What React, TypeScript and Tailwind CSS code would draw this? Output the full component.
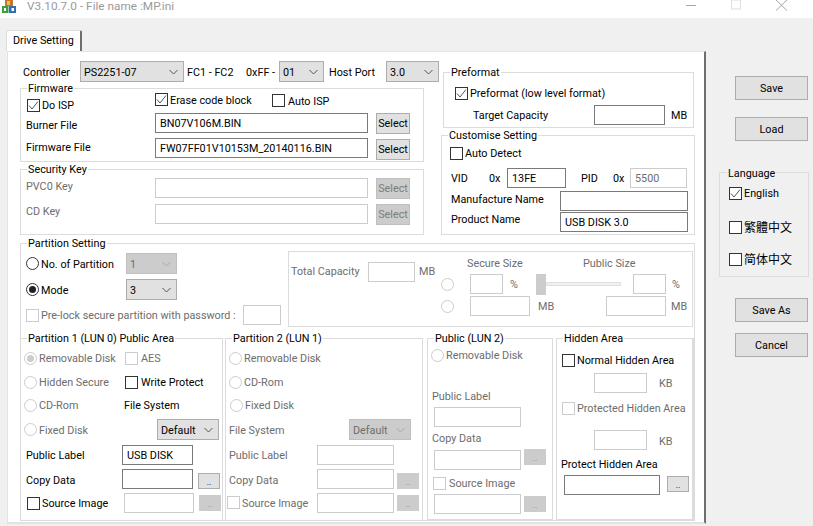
import React from 'react';

const FONT = 'font-["Roboto",sans-serif]';

// label, pushed down a pixel because Roboto sits high in its line box
const L = ({ className = '', children }: { className?: string; children?: React.ReactNode }) => (
  <span className={`pt-[2px] ${className}`}>{children}</span>
);

// win32 style controls
const Chk = ({ on, off, className = '' }: { on?: boolean; off?: boolean; className?: string }) => (
  <span className={`inline-flex h-[13px] w-[13px] shrink-0 items-center justify-center border bg-white ${off ? 'border-[#cccccc]' : 'border-[#333333]'} ${className}`}>
    {on && (
      <svg width="11" height="11" viewBox="0 0 11 11" fill="none">
        <path d="M1 5.5 L4 9 L10 1.5" stroke="#555555" strokeWidth="1" />
      </svg>
    )}
  </span>
);

const Radio = ({ on, off, className = '' }: { on?: boolean; off?: boolean; className?: string }) => (
  <span className={`inline-flex h-[13px] w-[13px] shrink-0 items-center justify-center rounded-full border bg-white ${off ? 'border-[#cccccc]' : 'border-[#333333]'} ${className}`}>
    {on && <span className={`h-[7px] w-[7px] rounded-full ${off ? 'bg-[#cccccc]' : 'bg-[#222222]'}`} />}
  </span>
);

const Input = ({ value, off, className = '' }: { value?: string; off?: boolean; className?: string }) => (
  <span className={`flex h-[20px] shrink-0 items-center border bg-white pl-[4px] ${off ? 'border-[#cccccc] text-[#6d6d6d]' : 'border-[#7a7a7a] text-black'} ${className}`}>
    <L>{value}</L>
  </span>
);

const Btn = ({ label, off, className = '' }: { label: string; off?: boolean; className?: string }) => (
  <span className={`flex shrink-0 items-center justify-center border ${off ? 'border-[#bfbfbf] bg-[#cccccc] text-[#7d7d7d]' : 'border-[#adadad] bg-[#e1e1e1] text-black'} ${className}`}>
    <L>{label}</L>
  </span>
);

const Dots = ({ off, className = '' }: { off?: boolean; className?: string }) => (
  <span className={`flex h-[16px] w-[22px] shrink-0 items-end justify-center border pb-[1px] text-[9px] leading-[9px] ${off ? 'border-[#cccccc] bg-[#cccccc] text-[#8a8a8a]' : 'border-[#adadad] bg-[#e1e1e1] text-black'} ${className}`}>
    ..
  </span>
);

const Sel = ({ value, off, className = '' }: { value: string; off?: boolean; className?: string }) => (
  <span className={`flex h-[21px] shrink-0 items-center justify-between border pl-[3px] pr-[5px] ${off ? 'border-[#bfbfbf] bg-[#cccccc] text-[#6d6d6d]' : 'border-[#adadad] bg-[#e1e1e1] text-black'} ${className}`}>
    <L>{value}</L>
    <svg width="9" height="6" viewBox="0 0 9 6" fill="none">
      <path d="M0.5 1 L4.5 5 L8.5 1" stroke={off ? '#a8a8a8' : '#555555'} strokeWidth="1" />
    </svg>
  </span>
);

const Group = ({ title, className = '', children }: { title: string; className?: string; children: React.ReactNode }) => (
  <div className={`relative shrink-0 border border-[#dcdcdc] ${className}`}>
    <span className="absolute left-[6px] top-[-7px] bg-white px-[1px] leading-[14px] text-black">{title}</span>
    {children}
  </div>
);

const GRAY = 'text-[#6d6d6d]';

export default function App() {
  return (
    <div className={`${FONT} flex h-[526px] w-[813px] flex-col overflow-hidden whitespace-nowrap bg-[#f0f0f0] text-[10.8px] leading-[14px] text-black`}>
      {/* title bar */}
      <div className="flex h-[18px] shrink-0 items-start bg-white">
        <svg className="ml-[2px] shrink-0" width="14" height="14" viewBox="0 0 14 14">
          <rect x="3" y="0" width="8" height="6" fill="#c9742c" />
          <rect x="5" y="1" width="3" height="4" fill="#e8c23a" />
          <rect x="0" y="6" width="6.5" height="7" fill="#3f9a4a" />
          <rect x="7" y="6" width="7" height="7" fill="#2f6fb5" />
          <rect x="2" y="8" width="2" height="3" fill="#ffffff" />
          <rect x="9.5" y="8" width="2.5" height="3" fill="#ffffff" />
        </svg>
        <span className="ml-[11px] text-[11.8px] leading-[13px] text-[#9a9a9a]">V3.10.7.0 - File name :MP.ini</span>
        <svg className="ml-auto shrink-0" width="111" height="12" viewBox="0 0 111 12" fill="none" stroke="#a8a8a8">
          <path d="M0 5.5 H10" />
          <rect x="45.5" y="0" width="9" height="9" stroke="#e0e0e0" />
          <path d="M90 0 L101 10.5 M101 0 L90 10.5" />
        </svg>
        <span className="w-[16px] shrink-0" />
      </div>

      <div className="flex min-h-0 flex-1">
        {/* tabbed area */}
        <div className="ml-[7px] flex w-[699px] shrink-0 flex-col pt-[12px]">
          <div className="-ml-px flex h-[21px] w-[76px] shrink-0 items-center rounded-t-[2px] border-l border-r-2 border-t border-[#dcdcdc] border-r-[#6e6e6e] bg-white pl-[6px]">
            Drive Setting
          </div>
          <div className="h-[473px] border-l border-t border-r-2 border-b-2 border-[#e3e3e3] border-r-[#6e6e6e] bg-white pl-[12px]">
            <div className="flex h-[190px]">
              {/* left column */}
              <div className="w-[421px] shrink-0">
                <div className="mt-[9px] flex h-[21px] items-center">
                  <L className="ml-[3px] w-[57px]">Controller</L>
                  <Sel value="PS2251-07" className="w-[104px]" />
                  <L className="ml-[3px] w-[59px]">FC1 - FC2</L>
                  <L className="w-[33px]">0xFF -</L>
                  <Sel value="01" className="w-[45px]" />
                  <L className="ml-[5px] w-[57px]">Host Port</L>
                  <Sel value="3.0" className="w-[53px]" />
                </div>
                <Group title="Firmware" className="mt-[6px] h-[74px] w-[404px]">
                  <div className="flex h-[22px]">
                    <Chk on className="ml-[6px] mt-[10px]" />
                    <L className="ml-[2px] mt-[8px] w-[113px]">Do ISP</L>
                    <Chk on className="mt-[4px]" />
                    <L className="ml-[2px] mt-[3px] w-[102px]">Erase code block</L>
                    <Chk className="mt-[5px]" />
                    <L className="ml-[3px] mt-[4px]">Auto ISP</L>
                  </div>
                  <div className="flex h-[24px] items-center">
                    <L className="ml-[5px] mt-[4px] w-[129px]">Burner File</L>
                    <Input value="BN07V106M.BIN" className="w-[213px]" />
                    <Btn label="Select" className="ml-[8px] h-[21px] w-[34px]" />
                  </div>
                  <div className="flex h-[25px] items-center">
                    <L className="ml-[5px] mt-[-2px] w-[129px]">Firmware File</L>
                    <Input value="FW07FF01V10153M_20140116.BIN" className="w-[213px]" />
                    <Btn label="Select" className="ml-[8px] mt-[3px] h-[21px] w-[34px]" />
                  </div>
                </Group>
                <Group title="Security Key" className="mt-[7px] h-[66px] w-[404px]">
                  <div className="mt-[7px] flex h-[22px] items-center">
                    <L className={`ml-[5px] mt-[-4px] w-[129px] ${GRAY}`}>PVC0 Key</L>
                    <Input off className="w-[213px]" />
                    <Btn off label="Select" className="ml-[8px] h-[21px] w-[34px]" />
                  </div>
                  <div className="mt-[4px] flex h-[22px] items-center">
                    <L className={`ml-[5px] mt-[-6px] w-[129px] ${GRAY}`}>CD Key</L>
                    <Input off className="w-[213px]" />
                    <Btn off label="Select" className="ml-[8px] h-[21px] w-[34px]" />
                  </div>
                </Group>
              </div>

              {/* right column */}
              <div className="w-[254px] shrink-0">
                <Group title="Preformat" className="ml-[2px] mt-[20px] h-[56px] w-[251px]">
                  <div className="mt-[12px] flex h-[16px] items-center pl-[11px]">
                    <Chk on />
                    <L className="ml-[2px]">Preformat (low level format)</L>
                  </div>
                  <div className="mt-[4px] flex h-[20px] items-center">
                    <L className="ml-[29px] w-[121px]">Target Capacity</L>
                    <Input className="w-[71px]" />
                    <L className="ml-[6px]">MB</L>
                  </div>
                </Group>
                <Group title="Customise Setting" className="mt-[7px] h-[100px] w-[254px]">
                  <div className="mt-[10px] flex h-[14px] items-center pl-[8px]">
                    <Chk />
                    <L className="ml-[2px]">Auto Detect</L>
                  </div>
                  <div className="mt-[8px] flex h-[20px] items-center">
                    <L className="ml-[9px] w-[38px]">VID</L>
                    <L className="w-[18px]">0x</L>
                    <Input value="13FE" className="w-[59px]" />
                    <L className="ml-[15px] w-[32px]">PID</L>
                    <L className="w-[17px]">0x</L>
                    <Input off value="5500" className="w-[57px]" />
                  </div>
                  <div className="mt-[3px] flex h-[20px] items-center">
                    <L className="ml-[9px] mt-[-5px] w-[109px]">Manufacture Name</L>
                    <Input className="w-[128px]" />
                  </div>
                  <div className="mt-[1px] flex h-[20px] items-center">
                    <L className="ml-[9px] mt-[-7px] w-[109px]">Product Name</L>
                    <Input value="USB DISK 3.0" className="w-[128px]" />
                  </div>
                </Group>
              </div>
            </div>

            {/* partition setting */}
            <Group title="Partition Setting" className="mt-[1px] h-[278px] w-[675px]">
              <div className="flex h-[94px]">
                <div className="w-[267px] shrink-0 pl-[5px]">
                  <div className="mt-[9px] flex h-[21px] items-center">
                    <Radio />
                    <L className="ml-[2px] w-[85px]">No. of Partition</L>
                    <Sel off value="1" className="w-[51px]" />
                  </div>
                  <div className="mt-[5px] flex h-[21px] items-center">
                    <Radio on />
                    <L className="ml-[2px] w-[85px]">Mode</L>
                    <Sel value="3" className="w-[51px]" />
                  </div>
                  <div className="mt-[5px] flex h-[20px] items-center">
                    <Chk off />
                    <L className={`ml-[2px] w-[202px] ${GRAY}`}>Pre-lock secure partition with password :</L>
                    <Input off className="w-[38px]" />
                  </div>
                </div>
                {/* capacity box */}
                <div className={`mt-[7px] flex h-[76px] w-[405px] border border-[#dcdcdc] ${GRAY}`}>
                  <div className="flex h-[64px] items-center">
                    <L className="ml-[2px] mt-[-27px] w-[77px]">Total Capacity</L>
                    <Input off className="mt-[-25px] w-[47px]" />
                    <L className="ml-[4px] mt-[-27px] w-[22px]">MB</L>
                  </div>
                  <div className="flex flex-col">
                    <div className="mt-[4px] flex h-[14px] items-center">
                      <L className="ml-[26px] w-[116px]">Secure Size</L>
                      <L>Public Size</L>
                    </div>
                    <div className="mt-[4px] flex h-[20px] items-center">
                      <Radio off />
                      <Input off className="ml-[16px] w-[33px]" />
                      <L className="ml-[7px] w-[26px]">%</L>
                      <span className="h-[21px] w-[10px] shrink-0 bg-[#cccccc]" />
                      <span className="h-[4px] w-[75px] shrink-0 border border-[#e0e0e0] bg-[#f0f0f0]" />
                      <Input off className="ml-[12px] w-[33px]" />
                      <L className="ml-[6px]">%</L>
                    </div>
                    <div className="mt-[2px] flex h-[20px] items-center">
                      <Radio off />
                      <Input off className="ml-[16px] w-[60px]" />
                      <L className="ml-[8px] w-[68px]">MB</L>
                      <Input off className="w-[60px]" />
                      <L className="ml-[5px]">MB</L>
                    </div>
                  </div>
                </div>
              </div>

              <div className="-ml-px flex h-[183px]">
                {/* partition 1 */}
                <Group title="Partition 1 (LUN 0) Public Area" className="h-[183px] w-[203px]">
                  <div className={`mt-[12px] flex h-[14px] items-center pl-[3px] ${GRAY}`}>
                    <Radio on off />
                    <L className="ml-[2px] w-[86px]">Removable Disk</L>
                    <Chk off />
                    <L className="ml-[3px]">AES</L>
                  </div>
                  <div className={`mt-[10px] flex h-[14px] items-center pl-[3px] ${GRAY}`}>
                    <Radio off />
                    <L className="ml-[2px] w-[86px]">Hidden Secure</L>
                    <Chk />
                    <L className="ml-[3px] text-black">Write Protect</L>
                  </div>
                  <div className={`mt-[9px] flex h-[14px] items-center pl-[3px] ${GRAY}`}>
                    <Radio off />
                    <L className="ml-[2px] w-[85px]">CD-Rom</L>
                    <L className="text-black">File System</L>
                  </div>
                  <div className={`mt-[7px] flex h-[21px] items-center pl-[3px] ${GRAY}`}>
                    <Radio off />
                    <L className="ml-[2px] w-[118px]">Fixed Disk</L>
                    <Sel value="Default" className="w-[62px] text-black" />
                  </div>
                  <div className="mt-[5px] flex h-[20px] items-center">
                    <L className="ml-[5px] w-[96px]">Public Label</L>
                    <Input value="USB DISK" className="w-[71px]" />
                  </div>
                  <div className="mt-[4px] flex h-[20px] items-center">
                    <L className="ml-[5px] mt-[2px] w-[96px]">Copy Data</L>
                    <Input className="w-[71px]" />
                    <Dots className="ml-[5px] mt-[3px]" />
                  </div>
                  <div className="mt-[4px] flex h-[20px] items-center">
                    <Chk className="ml-[6px]" />
                    <L className="ml-[2px] w-[82px]">Source Image</L>
                    <Input off className="w-[70px]" />
                    <Dots off className="ml-[5px]" />
                  </div>
                </Group>

                {/* partition 2 */}
                <Group title="Partition 2 (LUN 1)" className={`ml-[2px] h-[183px] w-[198px] ${GRAY}`}>
                  <div className="mt-[12px] flex h-[14px] items-center pl-[3px]">
                    <Radio off />
                    <L className="ml-[2px]">Removable Disk</L>
                  </div>
                  <div className="mt-[10px] flex h-[14px] items-center pl-[3px]">
                    <Radio off />
                    <L className="ml-[2px]">CD-Rom</L>
                  </div>
                  <div className="mt-[9px] flex h-[14px] items-center pl-[4px]">
                    <Radio off />
                    <L className="ml-[2px]">Fixed Disk</L>
                  </div>
                  <div className="mt-[7px] flex h-[21px] items-center">
                    <L className="ml-[3px] w-[120px]">File System</L>
                    <Sel off value="Default" className="w-[62px]" />
                  </div>
                  <div className="mt-[5px] flex h-[20px] items-center">
                    <L className="ml-[3px] w-[88px]">Public Label</L>
                    <Input off className="w-[77px]" />
                  </div>
                  <div className="mt-[4px] flex h-[20px] items-center">
                    <L className="ml-[3px] mt-[2px] w-[88px]">Copy Data</L>
                    <Input off className="w-[77px]" />
                    <Dots off className="ml-[3px] mt-[3px]" />
                  </div>
                  <div className="mt-[4px] flex h-[20px] items-center">
                    <Chk off className="ml-[1px] mt-[-2px]" />
                    <L className="ml-[2px] mt-[-1px] w-[75px]">Source Image</L>
                    <Input off className="w-[77px]" />
                    <Dots off className="ml-[3px]" />
                  </div>
                </Group>

                {/* public lun 2 */}
                <Group title="Public (LUN 2)" className={`ml-[4px] h-[182px] w-[126px] ${GRAY}`}>
                  <div className="mt-[9px] flex h-[14px] items-center pl-[3px]">
                    <Radio off />
                    <L className="ml-[2px]">Removable Disk</L>
                  </div>
                  <div className="ml-[4px] mt-[28px] h-[14px]">Public Label</div>
                  <div className="ml-[6px] mt-[3px]"><Input off className="w-[87px]" /></div>
                  <div className="ml-[4px] mt-[5px] h-[14px]">Copy Data</div>
                  <div className="mt-[4px] flex h-[20px] items-start pl-[6px]">
                    <Input off className="w-[87px]" />
                    <Dots off className="ml-[3px] mt-[-1px]" />
                  </div>
                  <div className="mt-[6px] flex h-[14px] items-center pl-[5px]">
                    <Chk off />
                    <L className="ml-[3px]">Source Image</L>
                  </div>
                  <div className="mt-[4px] flex h-[20px] items-start pl-[6px]">
                    <Input off className="w-[87px]" />
                    <Dots off className="ml-[3px] mt-[2px]" />
                  </div>
                </Group>

                {/* hidden area */}
                <Group title="Hidden Area" className={`ml-[3px] h-[182px] w-[138px] border-r-2 ${GRAY}`}>
                  <div className="mt-[14px] flex h-[14px] items-center pl-[5px]">
                    <Chk />
                    <L className="ml-[2px] text-black">Normal Hidden Area</L>
                  </div>
                  <div className="mt-[6px] flex h-[20px] items-center pl-[37px]">
                    <Input off className="w-[53px]" />
                    <L className="ml-[12px]">KB</L>
                  </div>
                  <div className="mt-[8px] flex h-[14px] items-center pl-[5px]">
                    <Chk off />
                    <L className="ml-[2px]">Protected Hidden Area</L>
                  </div>
                  <div className="mt-[15px] flex h-[20px] items-center pl-[37px]">
                    <Input off className="w-[53px]" />
                    <L className="ml-[12px] mt-[2px]">KB</L>
                  </div>
                  <div className="ml-[4px] mt-[8px] h-[14px] text-black">Protect Hidden Area</div>
                  <div className="mt-[3px] flex h-[20px] items-start pl-[7px]">
                    <Input className="w-[96px]" />
                    <Dots className="ml-[7px] mt-[1px]" />
                  </div>
                </Group>
              </div>
            </Group>
          </div>
        </div>

        {/* right buttons */}
        <div className="ml-[13px] flex w-[94px] flex-col items-start">
          <Btn label="Save" className="ml-[16px] mt-[58px] h-[24px] w-[73px]" />
          <Btn label="Load" className="ml-[16px] mt-[17px] h-[24px] w-[73px]" />
          <div className="relative mt-[31px] h-[105px] w-[90px] border border-[#dcdcdc]">
            <span className="absolute left-[7px] top-[-6px] bg-[#f0f0f0] px-[1px]">Language</span>
            <div className="mt-[13px] flex h-[14px] items-center pl-[9px]">
              <Chk on />
              <L className="ml-[2px]">English</L>
            </div>
            <div className="mt-[20px] flex h-[14px] items-center pl-[9px]">
              <Chk />
              <span className="ml-[2px] font-['Noto_Sans_CJK_TC'] text-[12px]">繁體中文</span>
            </div>
            <div className="mt-[18px] flex h-[14px] items-center pl-[9px]">
              <Chk />
              <span className="ml-[2px] font-['Noto_Sans_CJK_SC'] text-[12px]">简体中文</span>
            </div>
          </div>
          <Btn label="Save As" className="ml-[16px] mt-[21px] h-[24px] w-[73px]" />
          <Btn label="Cancel" className="ml-[16px] mt-[11px] h-[24px] w-[73px]" />
        </div>
      </div>
    </div>
  );
}
